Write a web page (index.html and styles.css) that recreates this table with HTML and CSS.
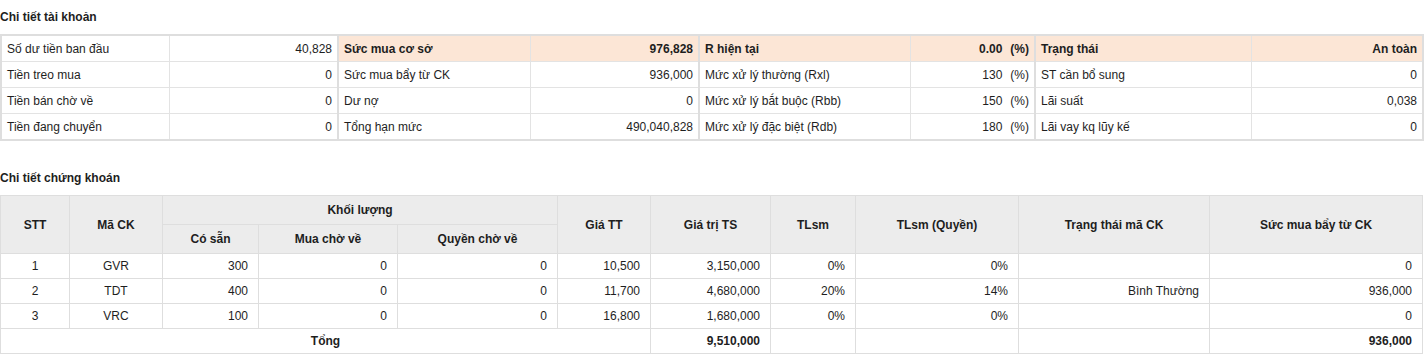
FILE: index.html
```html
<!DOCTYPE html>
<html>
  <head>
    <title>Chi tiết tài khoản</title>
    <meta charset="UTF-8">
    <link rel="stylesheet" href="styles.css">
  </head>
  <body>
    <div class="page">
      <div class="section-title">Chi tiết tài khoản</div>
      <div class="acct-grid">
        <table class="acct acct-1">
          <tr><td class="lbl">Số dư tiền ban đầu</td><td class="val">40,828</td></tr>
          <tr><td class="lbl">Tiền treo mua</td><td class="val">0</td></tr>
          <tr><td class="lbl">Tiền bán chờ về</td><td class="val">0</td></tr>
          <tr><td class="lbl">Tiền đang chuyển</td><td class="val">0</td></tr>
        </table>
        <table class="acct acct-2">
          <tr class="head"><td class="lbl">Sức mua cơ sở</td><td class="val">976,828</td></tr>
          <tr><td class="lbl">Sức mua bẩy từ CK</td><td class="val">936,000</td></tr>
          <tr><td class="lbl">Dư nợ</td><td class="val">0</td></tr>
          <tr><td class="lbl">Tổng hạn mức</td><td class="val">490,040,828</td></tr>
        </table>
        <table class="acct acct-3">
          <tr class="head"><td class="lbl">R hiện tại</td><td class="val">0.00<span class="unit">(%)</span></td></tr>
          <tr><td class="lbl">Mức xử lý thường (Rxl)</td><td class="val">130<span class="unit">(%)</span></td></tr>
          <tr><td class="lbl">Mức xử lý bắt buộc (Rbb)</td><td class="val">150<span class="unit">(%)</span></td></tr>
          <tr><td class="lbl">Mức xử lý đặc biệt (Rdb)</td><td class="val">180<span class="unit">(%)</span></td></tr>
        </table>
        <table class="acct acct-4">
          <tr class="head"><td class="lbl">Trạng thái</td><td class="val">An toàn</td></tr>
          <tr><td class="lbl">ST cần bổ sung</td><td class="val">0</td></tr>
          <tr><td class="lbl">Lãi suất</td><td class="val">0,038</td></tr>
          <tr><td class="lbl">Lãi vay kq lũy kế</td><td class="val">0</td></tr>
        </table>
      </div>

      <div class="section-title section-title-2">Chi tiết chứng khoán</div>
      <table class="stocks">
        <colgroup>
          <col style="width:69px">
          <col style="width:93px">
          <col style="width:96px">
          <col style="width:139px">
          <col style="width:160px">
          <col style="width:93px">
          <col style="width:120px">
          <col style="width:85px">
          <col style="width:163px">
          <col style="width:191px">
          <col style="width:213px">
        </colgroup>
        <thead>
          <tr>
            <th rowspan="2">STT</th>
            <th rowspan="2">Mã CK</th>
            <th colspan="3">Khối lượng</th>
            <th rowspan="2">Giá TT</th>
            <th rowspan="2">Giá trị TS</th>
            <th rowspan="2">TLsm</th>
            <th rowspan="2">TLsm (Quyền)</th>
            <th rowspan="2">Trạng thái mã CK</th>
            <th rowspan="2">Sức mua bẩy từ CK</th>
          </tr>
          <tr>
            <th>Có sẵn</th>
            <th>Mua chờ về</th>
            <th>Quyền chờ về</th>
          </tr>
        </thead>
        <tbody>
          <tr>
            <td class="c">1</td><td class="c">GVR</td><td>300</td><td>0</td><td>0</td>
            <td>10,500</td><td>3,150,000</td><td>0%</td><td>0%</td><td></td><td>0</td>
          </tr>
          <tr>
            <td class="c">2</td><td class="c">TDT</td><td>400</td><td>0</td><td>0</td>
            <td>11,700</td><td>4,680,000</td><td>20%</td><td>14%</td><td>Bình Thường</td><td>936,000</td>
          </tr>
          <tr>
            <td class="c">3</td><td class="c">VRC</td><td>100</td><td>0</td><td>0</td>
            <td>16,800</td><td>1,680,000</td><td>0%</td><td>0%</td><td></td><td>0</td>
          </tr>
          <tr class="total">
            <td colspan="6" class="c">Tổng</td>
            <td>9,510,000</td><td></td><td></td><td></td><td>936,000</td>
          </tr>
        </tbody>
      </table>
    </div>
  </body>
</html>
```

FILE: styles.css
```css
body {
  margin: 0;
  padding: 0;
  background-color: #fff;
  color: #1e1e1e;
  font-family: "Liberation Sans", Arial, sans-serif;
  font-size: 12px;
}

.page {
  width: 1426px;
}

.section-title {
  font-weight: bold;
  line-height: 14px;
  padding-top: 10px;
  margin-bottom: 10px;
}

.section-title-2 {
  padding-top: 30px;
  margin-bottom: 10px;
}

/* account summary blocks */
.acct-grid {
  display: grid;
  grid-template-columns: 335px 359px 334px 386px;
  gap: 2px;
  padding: 2px;
  width: 1420px;
  background-color: #dedede;
}

.acct {
  border-collapse: collapse;
  table-layout: fixed;
  width: 100%;
  background-color: #fff;
}

.acct td {
  height: 25px;
  padding: 0;
  border-top: 1px solid #e3e3e3;
  white-space: nowrap;
}

.acct tr:first-child td {
  border-top: none;
}

.acct .lbl {
  padding-left: 5px;
  border-right: 1px solid #e3e3e3;
}

.acct .val {
  text-align: right;
  padding-right: 5px;
}

.acct-1 .lbl { width: 162px; }
.acct-2 .lbl { width: 186px; }
.acct-3 .lbl { width: 205px; }
.acct-4 .lbl { width: 210px; }

.acct .head td {
  background-color: #fce6d6;
  font-weight: bold;
}

.acct .unit {
  margin-left: 8px;
}

/* stock details */
.stocks {
  border-collapse: collapse;
  table-layout: fixed;
  width: 1422px;
}

.stocks th,
.stocks td {
  border: 1px solid #dedede;
  padding: 0 10px;
  white-space: nowrap;
}

.stocks th {
  height: 28px;
  background-color: #ececec;
  font-weight: bold;
  text-align: center;
}

.stocks td {
  height: 24px;
  text-align: right;
}

.stocks td.c {
  text-align: center;
}

.stocks .total td {
  font-weight: bold;
}
```
